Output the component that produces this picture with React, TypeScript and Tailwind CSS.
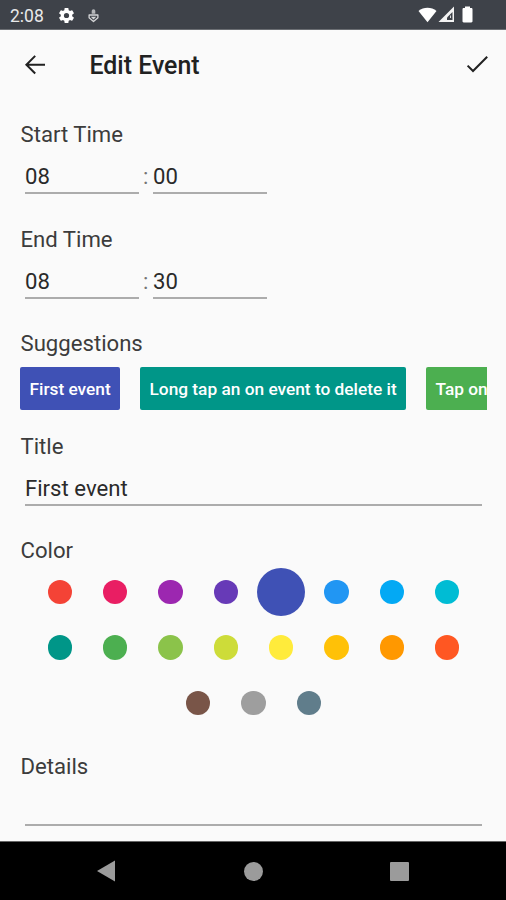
import type { ReactNode } from "react";
import clsx from "clsx";

const colorRows = [
  [
    "bg-[#f44336]",
    "bg-[#e91e63]",
    "bg-[#9c27b0]",
    "bg-[#673ab7]",
    "bg-[#3f51b5]",
    "bg-[#2196f3]",
    "bg-[#03a9f4]",
    "bg-[#00bcd4]",
  ],
  [
    "bg-[#009688]",
    "bg-[#4caf50]",
    "bg-[#8bc34a]",
    "bg-[#cddc39]",
    "bg-[#ffeb3b]",
    "bg-[#ffc107]",
    "bg-[#ff9800]",
    "bg-[#ff5722]",
  ],
  ["bg-[#795548]", "bg-[#9e9e9e]", "bg-[#607d8b]"],
];

const selectedColor = "bg-[#3f51b5]";

const suggestions = [
  { label: "First event", className: "w-[100px] bg-[#3f51b5]" },
  { label: "Long tap an on event to delete it", className: "w-[266px] bg-[#009688]" },
  { label: "Tap on", className: "w-[72px] bg-[#4caf50]" },
];

function StatusBar() {
  return (
    <div className="flex h-[30px] shrink-0 items-center border-b border-[#6b6e73] bg-[#3e4249] pl-[10px] pr-[33px] text-white">
      <span className="w-[47px] pt-[2px] text-[17.5px] leading-5 text-[#e8e9ea]">2:08</span>
      <svg className="mt-px h-[19px] w-[19px]" viewBox="0 0 24 24" fill="currentColor">
        <path d="M19.14 12.94c.04-.3.06-.61.06-.94 0-.32-.02-.64-.07-.94l2.03-1.58a.49.49 0 0 0 .12-.61l-1.92-3.32a.49.49 0 0 0-.59-.22l-2.39.96c-.5-.38-1.03-.7-1.62-.94l-.36-2.54a.48.48 0 0 0-.48-.41h-3.84c-.24 0-.43.17-.47.41l-.36 2.54c-.59.24-1.13.57-1.62.94l-2.39-.96a.48.48 0 0 0-.59.22L2.74 8.87c-.12.21-.08.47.12.61l2.03 1.58c-.05.3-.09.63-.09.94s.02.64.07.94l-2.03 1.58a.49.49 0 0 0-.12.61l1.92 3.32c.12.22.37.29.59.22l2.39-.96c.5.38 1.03.7 1.62.94l.36 2.54c.05.24.24.41.48.41h3.84c.24 0 .44-.17.47-.41l.36-2.54c.59-.24 1.13-.56 1.62-.94l2.39.96c.22.08.47 0 .59-.22l1.92-3.32a.48.48 0 0 0-.12-.61zM12 15.3A3.3 3.3 0 1 1 12 8.7a3.3 3.3 0 0 1 0 6.6" />
      </svg>
      <svg className="ml-[12px] mt-px h-[15px] w-[11px]" viewBox="0 0 11 15">
        <path d="M3.7 3a1.8 1.8 0 0 1 3.6 0v2.8H3.7z" fill="#b4b6b9" />
        <path d="M1.1 7h8.8v2.8l-4.4 3.8-4.4-3.8z" fill="none" stroke="#d4d5d7" strokeWidth="1.3" strokeLinejoin="round" />
        <path d="M2.8 8.8h5.4l-2.7 2.8z" fill="#d4d5d7" />
      </svg>
      <div className="ml-auto flex items-center">
        <svg className="h-[17px] w-[19px]" viewBox="0 0 19 17" fill="currentColor">
          <path d="M.5 5C5.5.7 13.5.7 18.5 5l-9 11.2z" />
        </svg>
        <svg className="ml-px h-[17px] w-[17px]" viewBox="0 0 17 17">
          <path d="M16 .5V16H.5z" fill="#f3f3f3" />
          <path d="M14.5 6v8H9v-2.5z" fill="#3e4249" />
          <path d="M12 9.5h1V12h-1z" fill="#d8d9db" />
        </svg>
        <svg className="ml-[7px] h-[17px] w-[11px]" viewBox="0 0 11 17" fill="currentColor">
          <path d="M3 .5h5V2h1.3c.7 0 1.2.5 1.2 1.2v12.1c0 .7-.5 1.2-1.2 1.2H1.7c-.7 0-1.2-.5-1.2-1.2V3.2C.5 2.5 1 2 1.7 2H3z" />
        </svg>
      </div>
    </div>
  );
}

function Header() {
  return (
    <header className="flex h-[73px] shrink-0 items-center pl-[20px] pr-[14px] text-[#212121]">
      <svg className="mb-[3px] h-[30px] w-[30px]" viewBox="0 0 30 30" fill="none" stroke="currentColor" strokeWidth="2">
        <path d="M25 14.7H6.8M15.2 5.9l-8.800 8.800 8.800 8.800" />
      </svg>
      <h1 className="mb-[2px] ml-[39.5px] text-[24.9px] font-[460] leading-8">Edit Event</h1>
      <svg className="mb-[3px] ml-auto h-[30px] w-[30px]" viewBox="0 0 30 30" fill="none" stroke="currentColor" strokeWidth="2">
        <path d="M5.600 15.600 11 21 25.200 6.800" />
      </svg>
    </header>
  );
}

function Section({ label, className, children }: { label: string; className?: string; children: ReactNode }) {
  return (
    <section className={clsx("shrink-0", className)}>
      <h2 className="h-[26px] pl-[20.5px] text-[22.15px] font-[370] leading-[26px] text-[#3c3c3c]">{label}</h2>
      {children}
    </section>
  );
}

function Field({ value, className }: { value: string; className?: string }) {
  return (
    <div className={clsx("h-[36px] border-b-2 border-[#acacac] pt-[5px] text-[22.15px] font-[370] leading-[26px] text-[#2a2a2a]", className)}>
      {value}
    </div>
  );
}

function TimeFields({ hours, minutes }: { hours: string; minutes: string }) {
  return (
    <div className="mt-[11px] flex pl-[25px]">
      <Field value={hours} className="w-[114px]" />
      <span className="w-[14px] pl-[4px] pt-[5px] text-[22.15px] leading-[26px] text-[#757575]">:</span>
      <Field value={minutes} className="w-[114px]" />
    </div>
  );
}

function ColorPicker() {
  return (
    <div className="mt-[1.5px]">
      {colorRows.map((row, i) => (
        <div key={i} className="flex justify-center pl-px">
          {row.map((color) => (
            <div key={color} className="flex h-[55.35px] w-[55.35px] items-center justify-center">
              <div
                className={clsx(
                  "rounded-full",
                  color,
                  color === selectedColor ? "h-[48.5px] w-[48.5px]" : "h-[24.5px] w-[24.5px]"
                )}
              />
            </div>
          ))}
        </div>
      ))}
    </div>
  );
}

function NavigationBar() {
  return (
    <nav className="flex h-[59px] shrink-0 items-center border-t border-[#666] bg-black pl-[97px] text-[#9b9b9b]">
      <svg className="h-[22px] w-[18px]" viewBox="0 0 18 22" fill="currentColor">
        <path d="M18 .5v21L0 11z" />
      </svg>
      <div className="ml-[129px] h-[19px] w-[19px] rounded-full bg-current" />
      <div className="ml-[127px] h-[19px] w-[19px] rounded-[1px] bg-current" />
    </nav>
  );
}

export default function App() {
  return (
    <div className="flex h-[900px] w-[506px] flex-col overflow-hidden bg-[#fafafa] font-['Roboto',sans-serif]">
      <StatusBar />
      <Header />
      <main className="flex min-h-0 flex-1 flex-col overflow-hidden pt-[18px]">
        <Section label="Start Time" className="h-[105px]">
          <TimeFields hours="08" minutes="00" />
        </Section>
        <Section label="End Time" className="h-[104px]">
          <TimeFields hours="08" minutes="30" />
        </Section>
        <Section label="Suggestions" className="h-[103px]">
          <div className="ml-[20px] mr-[19px] mt-[11px] flex gap-5 overflow-hidden">
            {suggestions.map((item) => (
              <button
                key={item.label}
                className={clsx(
                  "h-[43px] shrink-0 whitespace-nowrap rounded-[2px] pl-[9.5px] pt-[3px] text-left text-[17.3px] font-[470] text-white",
                  item.className
                )}
              >
                {item.label}
              </button>
            ))}
          </div>
        </Section>
        <Section label="Title" className="h-[104px]">
          <Field value="First event" className="ml-[25px] mr-[24px] mt-[11px]" />
        </Section>
        <Section label="Color" className="h-[216px]">
          <ColorPicker />
        </Section>
        <Section label="Details">
          <Field value="" className="ml-[25px] mr-[24px] mt-[11px]" />
        </Section>
      </main>
      <NavigationBar />
    </div>
  );
}
